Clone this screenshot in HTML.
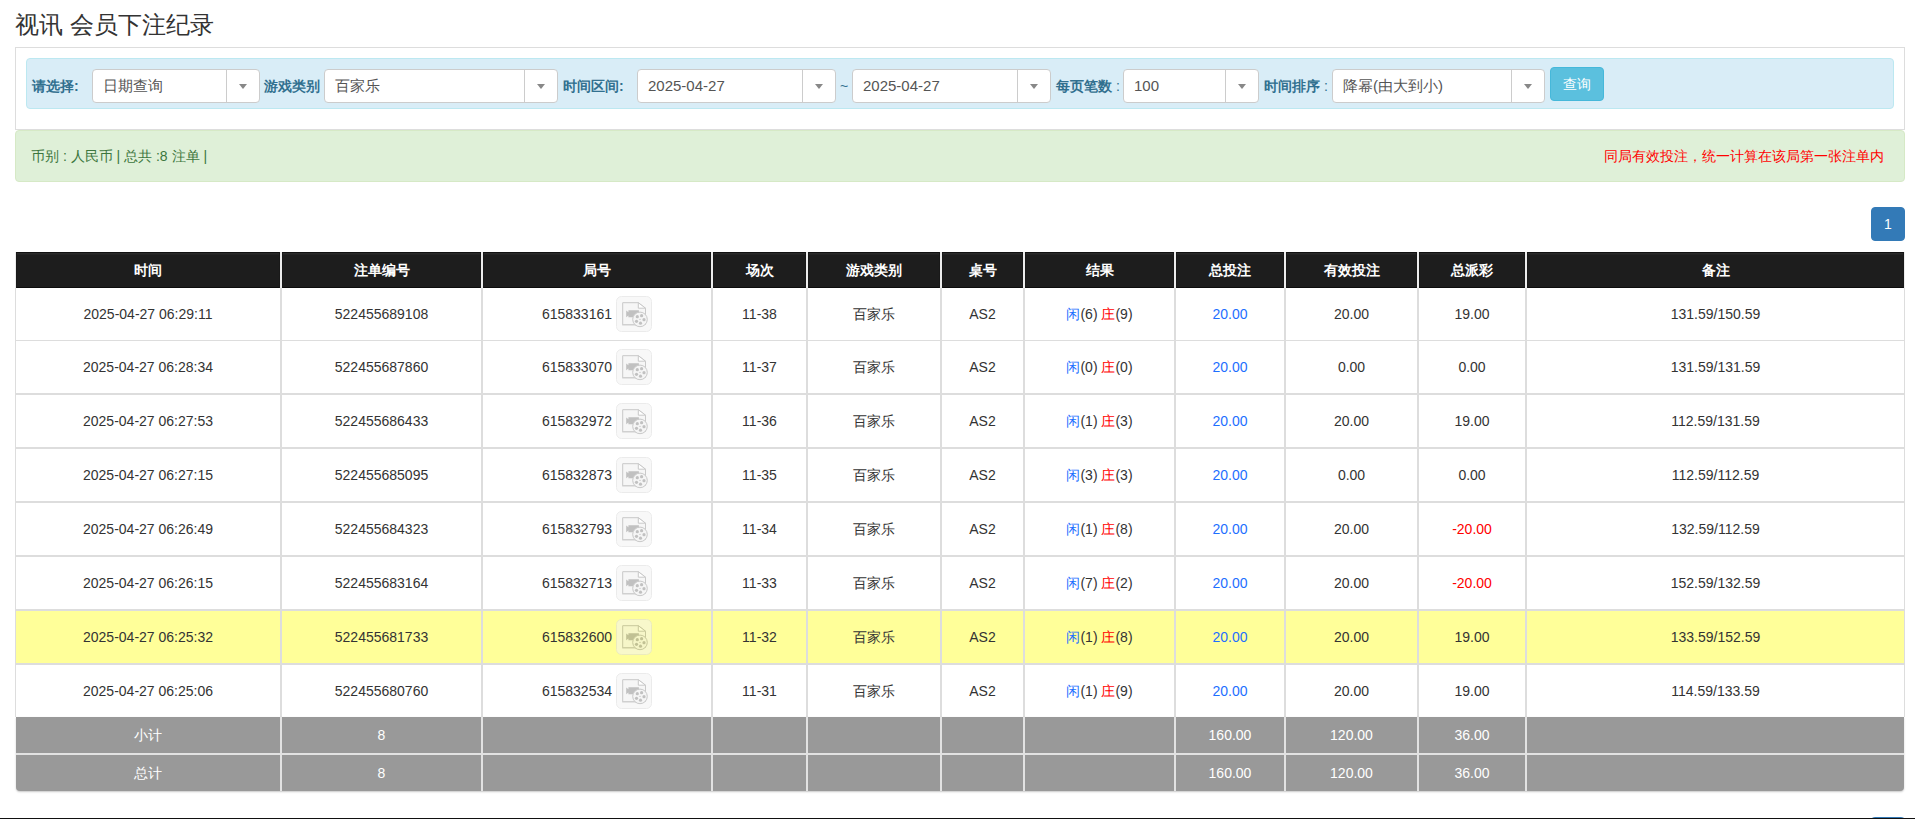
<!DOCTYPE html>
<html><head><meta charset="utf-8"><style>
*{box-sizing:border-box}
html,body{margin:0;padding:0;background:#fff}
body{width:1915px;height:819px;overflow:hidden;position:relative;font-family:"Liberation Sans",sans-serif;font-size:14px;color:#333}
.a{position:absolute}
.t{position:absolute;white-space:nowrap}
.sel{position:absolute;top:69px;height:34px;background:#fff;border:1px solid #ccc;border-radius:4px}
.sel .v{position:absolute;left:10px;top:0;line-height:32px;font-size:15px;color:#555;white-space:nowrap}
.sel .d{position:absolute;top:0;bottom:0;width:1px;background:#ccc}
.sel .c{position:absolute;top:14px;width:0;height:0;border-left:4px solid transparent;border-right:4px solid transparent;border-top:5px solid #888}
.lab{position:absolute;top:69px;line-height:34px;color:#31708f;font-weight:bold;white-space:nowrap}
.cell{position:absolute;text-align:center;white-space:nowrap}
</style></head><body>

<div class="t" style="left:15px;top:9px;font-size:24px;line-height:32px;color:#333">视讯 会员下注纪录</div>
<div class="a" style="left:15px;top:47px;width:1890px;height:83px;border:1px solid #ddd;border-bottom:1px solid #ddd"></div>
<div class="a" style="left:26px;top:58px;width:1868px;height:51px;background:#d9edf7;border:1px solid #bce8f1;border-radius:4px"></div>
<div class="lab" style="left:32px">请选择:</div>
<div class="lab" style="left:264px">游戏类别</div>
<div class="lab" style="left:563px">时间区间:</div>
<div class="lab" style="left:1056px">每页笔数<span style="font-weight:normal"> :</span></div>
<div class="lab" style="left:1264px">时间排序<span style="font-weight:normal"> :</span></div>
<div class="t" style="left:840px;top:69px;line-height:34px;color:#31708f">~</div>
<div class="sel" style="left:92px;width:168px"><div class="v">日期查询</div><div class="d" style="left:133px"></div><div class="c" style="left:146px"></div></div>
<div class="sel" style="left:324px;width:234px"><div class="v">百家乐</div><div class="d" style="left:199px"></div><div class="c" style="left:212px"></div></div>
<div class="sel" style="left:637px;width:199px"><div class="v">2025-04-27</div><div class="d" style="left:164px"></div><div class="c" style="left:177px"></div></div>
<div class="sel" style="left:852px;width:199px"><div class="v">2025-04-27</div><div class="d" style="left:164px"></div><div class="c" style="left:177px"></div></div>
<div class="sel" style="left:1123px;width:136px"><div class="v">100</div><div class="d" style="left:101px"></div><div class="c" style="left:114px"></div></div>
<div class="sel" style="left:1332px;width:213px"><div class="v">降幂(由大到小)</div><div class="d" style="left:178px"></div><div class="c" style="left:191px"></div></div>
<div class="a" style="left:1550px;top:67px;width:54px;height:34px;background:#5bc0de;border:1px solid #46b8da;border-radius:4px;color:#fff;text-align:center;line-height:32px">查询</div>
<div class="a" style="left:15px;top:130px;width:1890px;height:52px;background:#dff0d8;border:1px solid #d6e9c6;border-radius:4px"></div>
<div class="t" style="left:31px;top:146px;line-height:20px;color:#3c763d">币别 : 人民币 | 总共 :8 注单 |</div>
<div class="t" style="right:31px;top:146px;line-height:20px;color:#f00">同局有效投注，统一计算在该局第一张注单内</div>
<div class="a" style="left:1871px;top:207px;width:34px;height:34px;background:#337ab7;border:1px solid #337ab7;border-radius:4px;color:#fff;text-align:center;line-height:32px;font-size:14px">1</div>
<div class="a" style="left:15px;top:252px;width:266px;height:36px;background:#ececec"></div>
<div class="cell" style="left:16px;top:252px;width:264px;height:36px;background:#1d1d1d;border:1px solid #191919;border-top-color:#111;border-bottom-color:#0c0c0c;box-shadow:inset 0 1px 0 #2a2a2a,inset 0 2px 0 #232323;color:#fff;font-weight:bold;line-height:34px">时间</div>
<div class="a" style="left:281px;top:252px;width:201px;height:36px;background:#ececec"></div>
<div class="cell" style="left:282px;top:252px;width:199px;height:36px;background:#1d1d1d;border:1px solid #191919;border-top-color:#111;border-bottom-color:#0c0c0c;box-shadow:inset 0 1px 0 #2a2a2a,inset 0 2px 0 #232323;color:#fff;font-weight:bold;line-height:34px">注单编号</div>
<div class="a" style="left:482px;top:252px;width:230px;height:36px;background:#ececec"></div>
<div class="cell" style="left:483px;top:252px;width:228px;height:36px;background:#1d1d1d;border:1px solid #191919;border-top-color:#111;border-bottom-color:#0c0c0c;box-shadow:inset 0 1px 0 #2a2a2a,inset 0 2px 0 #232323;color:#fff;font-weight:bold;line-height:34px">局号</div>
<div class="a" style="left:712px;top:252px;width:95px;height:36px;background:#ececec"></div>
<div class="cell" style="left:713px;top:252px;width:93px;height:36px;background:#1d1d1d;border:1px solid #191919;border-top-color:#111;border-bottom-color:#0c0c0c;box-shadow:inset 0 1px 0 #2a2a2a,inset 0 2px 0 #232323;color:#fff;font-weight:bold;line-height:34px">场次</div>
<div class="a" style="left:807px;top:252px;width:134px;height:36px;background:#ececec"></div>
<div class="cell" style="left:808px;top:252px;width:132px;height:36px;background:#1d1d1d;border:1px solid #191919;border-top-color:#111;border-bottom-color:#0c0c0c;box-shadow:inset 0 1px 0 #2a2a2a,inset 0 2px 0 #232323;color:#fff;font-weight:bold;line-height:34px">游戏类别</div>
<div class="a" style="left:941px;top:252px;width:83px;height:36px;background:#ececec"></div>
<div class="cell" style="left:942px;top:252px;width:81px;height:36px;background:#1d1d1d;border:1px solid #191919;border-top-color:#111;border-bottom-color:#0c0c0c;box-shadow:inset 0 1px 0 #2a2a2a,inset 0 2px 0 #232323;color:#fff;font-weight:bold;line-height:34px">桌号</div>
<div class="a" style="left:1024px;top:252px;width:151px;height:36px;background:#ececec"></div>
<div class="cell" style="left:1025px;top:252px;width:149px;height:36px;background:#1d1d1d;border:1px solid #191919;border-top-color:#111;border-bottom-color:#0c0c0c;box-shadow:inset 0 1px 0 #2a2a2a,inset 0 2px 0 #232323;color:#fff;font-weight:bold;line-height:34px">结果</div>
<div class="a" style="left:1175px;top:252px;width:110px;height:36px;background:#ececec"></div>
<div class="cell" style="left:1176px;top:252px;width:108px;height:36px;background:#1d1d1d;border:1px solid #191919;border-top-color:#111;border-bottom-color:#0c0c0c;box-shadow:inset 0 1px 0 #2a2a2a,inset 0 2px 0 #232323;color:#fff;font-weight:bold;line-height:34px">总投注</div>
<div class="a" style="left:1285px;top:252px;width:133px;height:36px;background:#ececec"></div>
<div class="cell" style="left:1286px;top:252px;width:131px;height:36px;background:#1d1d1d;border:1px solid #191919;border-top-color:#111;border-bottom-color:#0c0c0c;box-shadow:inset 0 1px 0 #2a2a2a,inset 0 2px 0 #232323;color:#fff;font-weight:bold;line-height:34px">有效投注</div>
<div class="a" style="left:1418px;top:252px;width:108px;height:36px;background:#ececec"></div>
<div class="cell" style="left:1419px;top:252px;width:106px;height:36px;background:#1d1d1d;border:1px solid #191919;border-top-color:#111;border-bottom-color:#0c0c0c;box-shadow:inset 0 1px 0 #2a2a2a,inset 0 2px 0 #232323;color:#fff;font-weight:bold;line-height:34px">总派彩</div>
<div class="a" style="left:1526px;top:252px;width:379px;height:36px;background:#ececec"></div>
<div class="cell" style="left:1527px;top:252px;width:377px;height:36px;background:#1d1d1d;border:1px solid #191919;border-top-color:#111;border-bottom-color:#0c0c0c;box-shadow:inset 0 1px 0 #2a2a2a,inset 0 2px 0 #232323;color:#fff;font-weight:bold;line-height:34px">备注</div>
<div class="a" style="left:15px;top:288px;width:1890px;height:429px;background:#fff"></div>
<div class="a" style="left:15px;top:340px;width:1890px;height:1px;background:#ddd"></div>
<div class="a" style="left:15px;top:393px;width:1890px;height:2px;background:#ddd"></div>
<div class="a" style="left:15px;top:447px;width:1890px;height:2px;background:#ddd"></div>
<div class="a" style="left:15px;top:501px;width:1890px;height:2px;background:#ddd"></div>
<div class="a" style="left:15px;top:555px;width:1890px;height:2px;background:#ddd"></div>
<div class="a" style="left:15px;top:609px;width:1890px;height:2px;background:#ddd"></div>
<div class="a" style="left:15px;top:611px;width:1890px;height:52px;background:#ffff99"></div>
<div class="a" style="left:15px;top:663px;width:1890px;height:2px;background:#ddd"></div>
<div class="a" style="left:15px;top:288px;width:1px;height:429px;background:#ddd"></div>
<div class="a" style="left:1904px;top:288px;width:1px;height:429px;background:#ddd"></div>
<div class="a" style="left:280px;top:288px;width:2px;height:429px;background:#ddd"></div>
<div class="a" style="left:481px;top:288px;width:2px;height:429px;background:#ddd"></div>
<div class="a" style="left:711px;top:288px;width:2px;height:429px;background:#ddd"></div>
<div class="a" style="left:806px;top:288px;width:2px;height:429px;background:#ddd"></div>
<div class="a" style="left:940px;top:288px;width:2px;height:429px;background:#ddd"></div>
<div class="a" style="left:1023px;top:288px;width:2px;height:429px;background:#ddd"></div>
<div class="a" style="left:1174px;top:288px;width:2px;height:429px;background:#ddd"></div>
<div class="a" style="left:1284px;top:288px;width:2px;height:429px;background:#ddd"></div>
<div class="a" style="left:1417px;top:288px;width:2px;height:429px;background:#ddd"></div>
<div class="a" style="left:1525px;top:288px;width:2px;height:429px;background:#ddd"></div>
<div class="cell" style="left:15px;top:288px;width:266px;height:52px;line-height:52px">2025-04-27 06:29:11</div>
<div class="cell" style="left:281px;top:288px;width:201px;height:52px;line-height:52px">522455689108</div>
<div class="t" style="right:1303px;top:288px;line-height:52px">615833161</div>
<div class="a" style="left:616px;top:296px;width:36px;height:36px"><svg width="36" height="36" viewBox="0 0 36 36" style="position:absolute;left:0;top:0;opacity:0.55"><rect x="0.5" y="0.5" width="35" height="35" rx="5" fill="#f4f4f4" stroke="#dcdcdc"/>
<path d="M6.7 6.7 H22.3 L29.5 12.2 V28.5 H6.7 Z" fill="#efefef" stroke="#9d9d9d" stroke-width="1"/>
<path d="M22.3 6.7 V12.2 H29.5 Z" fill="#ffffff" stroke="#9d9d9d" stroke-width="1"/>
<rect x="6.2" y="28" width="16" height="1.5" fill="#aaaaaa"/>
<path d="M10.2 14.6 L12.4 16.2 V14.3 H22.9 V21.3 H12.4 V19.5 L10.2 21.2 Z" fill="#909090"/>
<circle cx="24" cy="23.4" r="7.3" fill="#ededed" stroke="#9d9d9d" stroke-width="1"/>
<circle cx="21.3" cy="20.7" r="1.6" fill="#909090"/><circle cx="25.6" cy="19.7" r="1.6" fill="#909090"/>
<circle cx="28" cy="23.7" r="1.6" fill="#909090"/><circle cx="24.5" cy="27.2" r="1.6" fill="#909090"/>
<circle cx="20.5" cy="25.3" r="1.6" fill="#909090"/><circle cx="24" cy="23.4" r="0.6" fill="#909090"/></svg></div>
<div class="cell" style="left:712px;top:288px;width:95px;height:52px;line-height:52px">11-38</div>
<div class="cell" style="left:807px;top:288px;width:134px;height:52px;line-height:52px">百家乐</div>
<div class="cell" style="left:941px;top:288px;width:83px;height:52px;line-height:52px">AS2</div>
<div class="cell" style="left:1024px;top:288px;width:151px;height:52px;line-height:52px"><span style="color:#1e6fff">闲</span>(6) <span style="color:#f00">庄</span>(9)</div>
<div class="cell" style="left:1175px;top:288px;width:110px;height:52px;line-height:52px"><span style="color:#1e6fff">20.00</span></div>
<div class="cell" style="left:1285px;top:288px;width:133px;height:52px;line-height:52px">20.00</div>
<div class="cell" style="left:1418px;top:288px;width:108px;height:52px;line-height:52px">19.00</div>
<div class="cell" style="left:1526px;top:288px;width:379px;height:52px;line-height:52px">131.59/150.59</div>
<div class="cell" style="left:15px;top:341px;width:266px;height:52px;line-height:52px">2025-04-27 06:28:34</div>
<div class="cell" style="left:281px;top:341px;width:201px;height:52px;line-height:52px">522455687860</div>
<div class="t" style="right:1303px;top:341px;line-height:52px">615833070</div>
<div class="a" style="left:616px;top:349px;width:36px;height:36px"><svg width="36" height="36" viewBox="0 0 36 36" style="position:absolute;left:0;top:0;opacity:0.55"><rect x="0.5" y="0.5" width="35" height="35" rx="5" fill="#f4f4f4" stroke="#dcdcdc"/>
<path d="M6.7 6.7 H22.3 L29.5 12.2 V28.5 H6.7 Z" fill="#efefef" stroke="#9d9d9d" stroke-width="1"/>
<path d="M22.3 6.7 V12.2 H29.5 Z" fill="#ffffff" stroke="#9d9d9d" stroke-width="1"/>
<rect x="6.2" y="28" width="16" height="1.5" fill="#aaaaaa"/>
<path d="M10.2 14.6 L12.4 16.2 V14.3 H22.9 V21.3 H12.4 V19.5 L10.2 21.2 Z" fill="#909090"/>
<circle cx="24" cy="23.4" r="7.3" fill="#ededed" stroke="#9d9d9d" stroke-width="1"/>
<circle cx="21.3" cy="20.7" r="1.6" fill="#909090"/><circle cx="25.6" cy="19.7" r="1.6" fill="#909090"/>
<circle cx="28" cy="23.7" r="1.6" fill="#909090"/><circle cx="24.5" cy="27.2" r="1.6" fill="#909090"/>
<circle cx="20.5" cy="25.3" r="1.6" fill="#909090"/><circle cx="24" cy="23.4" r="0.6" fill="#909090"/></svg></div>
<div class="cell" style="left:712px;top:341px;width:95px;height:52px;line-height:52px">11-37</div>
<div class="cell" style="left:807px;top:341px;width:134px;height:52px;line-height:52px">百家乐</div>
<div class="cell" style="left:941px;top:341px;width:83px;height:52px;line-height:52px">AS2</div>
<div class="cell" style="left:1024px;top:341px;width:151px;height:52px;line-height:52px"><span style="color:#1e6fff">闲</span>(0) <span style="color:#f00">庄</span>(0)</div>
<div class="cell" style="left:1175px;top:341px;width:110px;height:52px;line-height:52px"><span style="color:#1e6fff">20.00</span></div>
<div class="cell" style="left:1285px;top:341px;width:133px;height:52px;line-height:52px">0.00</div>
<div class="cell" style="left:1418px;top:341px;width:108px;height:52px;line-height:52px">0.00</div>
<div class="cell" style="left:1526px;top:341px;width:379px;height:52px;line-height:52px">131.59/131.59</div>
<div class="cell" style="left:15px;top:395px;width:266px;height:52px;line-height:52px">2025-04-27 06:27:53</div>
<div class="cell" style="left:281px;top:395px;width:201px;height:52px;line-height:52px">522455686433</div>
<div class="t" style="right:1303px;top:395px;line-height:52px">615832972</div>
<div class="a" style="left:616px;top:403px;width:36px;height:36px"><svg width="36" height="36" viewBox="0 0 36 36" style="position:absolute;left:0;top:0;opacity:0.55"><rect x="0.5" y="0.5" width="35" height="35" rx="5" fill="#f4f4f4" stroke="#dcdcdc"/>
<path d="M6.7 6.7 H22.3 L29.5 12.2 V28.5 H6.7 Z" fill="#efefef" stroke="#9d9d9d" stroke-width="1"/>
<path d="M22.3 6.7 V12.2 H29.5 Z" fill="#ffffff" stroke="#9d9d9d" stroke-width="1"/>
<rect x="6.2" y="28" width="16" height="1.5" fill="#aaaaaa"/>
<path d="M10.2 14.6 L12.4 16.2 V14.3 H22.9 V21.3 H12.4 V19.5 L10.2 21.2 Z" fill="#909090"/>
<circle cx="24" cy="23.4" r="7.3" fill="#ededed" stroke="#9d9d9d" stroke-width="1"/>
<circle cx="21.3" cy="20.7" r="1.6" fill="#909090"/><circle cx="25.6" cy="19.7" r="1.6" fill="#909090"/>
<circle cx="28" cy="23.7" r="1.6" fill="#909090"/><circle cx="24.5" cy="27.2" r="1.6" fill="#909090"/>
<circle cx="20.5" cy="25.3" r="1.6" fill="#909090"/><circle cx="24" cy="23.4" r="0.6" fill="#909090"/></svg></div>
<div class="cell" style="left:712px;top:395px;width:95px;height:52px;line-height:52px">11-36</div>
<div class="cell" style="left:807px;top:395px;width:134px;height:52px;line-height:52px">百家乐</div>
<div class="cell" style="left:941px;top:395px;width:83px;height:52px;line-height:52px">AS2</div>
<div class="cell" style="left:1024px;top:395px;width:151px;height:52px;line-height:52px"><span style="color:#1e6fff">闲</span>(1) <span style="color:#f00">庄</span>(3)</div>
<div class="cell" style="left:1175px;top:395px;width:110px;height:52px;line-height:52px"><span style="color:#1e6fff">20.00</span></div>
<div class="cell" style="left:1285px;top:395px;width:133px;height:52px;line-height:52px">20.00</div>
<div class="cell" style="left:1418px;top:395px;width:108px;height:52px;line-height:52px">19.00</div>
<div class="cell" style="left:1526px;top:395px;width:379px;height:52px;line-height:52px">112.59/131.59</div>
<div class="cell" style="left:15px;top:449px;width:266px;height:52px;line-height:52px">2025-04-27 06:27:15</div>
<div class="cell" style="left:281px;top:449px;width:201px;height:52px;line-height:52px">522455685095</div>
<div class="t" style="right:1303px;top:449px;line-height:52px">615832873</div>
<div class="a" style="left:616px;top:457px;width:36px;height:36px"><svg width="36" height="36" viewBox="0 0 36 36" style="position:absolute;left:0;top:0;opacity:0.55"><rect x="0.5" y="0.5" width="35" height="35" rx="5" fill="#f4f4f4" stroke="#dcdcdc"/>
<path d="M6.7 6.7 H22.3 L29.5 12.2 V28.5 H6.7 Z" fill="#efefef" stroke="#9d9d9d" stroke-width="1"/>
<path d="M22.3 6.7 V12.2 H29.5 Z" fill="#ffffff" stroke="#9d9d9d" stroke-width="1"/>
<rect x="6.2" y="28" width="16" height="1.5" fill="#aaaaaa"/>
<path d="M10.2 14.6 L12.4 16.2 V14.3 H22.9 V21.3 H12.4 V19.5 L10.2 21.2 Z" fill="#909090"/>
<circle cx="24" cy="23.4" r="7.3" fill="#ededed" stroke="#9d9d9d" stroke-width="1"/>
<circle cx="21.3" cy="20.7" r="1.6" fill="#909090"/><circle cx="25.6" cy="19.7" r="1.6" fill="#909090"/>
<circle cx="28" cy="23.7" r="1.6" fill="#909090"/><circle cx="24.5" cy="27.2" r="1.6" fill="#909090"/>
<circle cx="20.5" cy="25.3" r="1.6" fill="#909090"/><circle cx="24" cy="23.4" r="0.6" fill="#909090"/></svg></div>
<div class="cell" style="left:712px;top:449px;width:95px;height:52px;line-height:52px">11-35</div>
<div class="cell" style="left:807px;top:449px;width:134px;height:52px;line-height:52px">百家乐</div>
<div class="cell" style="left:941px;top:449px;width:83px;height:52px;line-height:52px">AS2</div>
<div class="cell" style="left:1024px;top:449px;width:151px;height:52px;line-height:52px"><span style="color:#1e6fff">闲</span>(3) <span style="color:#f00">庄</span>(3)</div>
<div class="cell" style="left:1175px;top:449px;width:110px;height:52px;line-height:52px"><span style="color:#1e6fff">20.00</span></div>
<div class="cell" style="left:1285px;top:449px;width:133px;height:52px;line-height:52px">0.00</div>
<div class="cell" style="left:1418px;top:449px;width:108px;height:52px;line-height:52px">0.00</div>
<div class="cell" style="left:1526px;top:449px;width:379px;height:52px;line-height:52px">112.59/112.59</div>
<div class="cell" style="left:15px;top:503px;width:266px;height:52px;line-height:52px">2025-04-27 06:26:49</div>
<div class="cell" style="left:281px;top:503px;width:201px;height:52px;line-height:52px">522455684323</div>
<div class="t" style="right:1303px;top:503px;line-height:52px">615832793</div>
<div class="a" style="left:616px;top:511px;width:36px;height:36px"><svg width="36" height="36" viewBox="0 0 36 36" style="position:absolute;left:0;top:0;opacity:0.55"><rect x="0.5" y="0.5" width="35" height="35" rx="5" fill="#f4f4f4" stroke="#dcdcdc"/>
<path d="M6.7 6.7 H22.3 L29.5 12.2 V28.5 H6.7 Z" fill="#efefef" stroke="#9d9d9d" stroke-width="1"/>
<path d="M22.3 6.7 V12.2 H29.5 Z" fill="#ffffff" stroke="#9d9d9d" stroke-width="1"/>
<rect x="6.2" y="28" width="16" height="1.5" fill="#aaaaaa"/>
<path d="M10.2 14.6 L12.4 16.2 V14.3 H22.9 V21.3 H12.4 V19.5 L10.2 21.2 Z" fill="#909090"/>
<circle cx="24" cy="23.4" r="7.3" fill="#ededed" stroke="#9d9d9d" stroke-width="1"/>
<circle cx="21.3" cy="20.7" r="1.6" fill="#909090"/><circle cx="25.6" cy="19.7" r="1.6" fill="#909090"/>
<circle cx="28" cy="23.7" r="1.6" fill="#909090"/><circle cx="24.5" cy="27.2" r="1.6" fill="#909090"/>
<circle cx="20.5" cy="25.3" r="1.6" fill="#909090"/><circle cx="24" cy="23.4" r="0.6" fill="#909090"/></svg></div>
<div class="cell" style="left:712px;top:503px;width:95px;height:52px;line-height:52px">11-34</div>
<div class="cell" style="left:807px;top:503px;width:134px;height:52px;line-height:52px">百家乐</div>
<div class="cell" style="left:941px;top:503px;width:83px;height:52px;line-height:52px">AS2</div>
<div class="cell" style="left:1024px;top:503px;width:151px;height:52px;line-height:52px"><span style="color:#1e6fff">闲</span>(1) <span style="color:#f00">庄</span>(8)</div>
<div class="cell" style="left:1175px;top:503px;width:110px;height:52px;line-height:52px"><span style="color:#1e6fff">20.00</span></div>
<div class="cell" style="left:1285px;top:503px;width:133px;height:52px;line-height:52px">20.00</div>
<div class="cell" style="left:1418px;top:503px;width:108px;height:52px;line-height:52px"><span style="color:#f00">-20.00</span></div>
<div class="cell" style="left:1526px;top:503px;width:379px;height:52px;line-height:52px">132.59/112.59</div>
<div class="cell" style="left:15px;top:557px;width:266px;height:52px;line-height:52px">2025-04-27 06:26:15</div>
<div class="cell" style="left:281px;top:557px;width:201px;height:52px;line-height:52px">522455683164</div>
<div class="t" style="right:1303px;top:557px;line-height:52px">615832713</div>
<div class="a" style="left:616px;top:565px;width:36px;height:36px"><svg width="36" height="36" viewBox="0 0 36 36" style="position:absolute;left:0;top:0;opacity:0.55"><rect x="0.5" y="0.5" width="35" height="35" rx="5" fill="#f4f4f4" stroke="#dcdcdc"/>
<path d="M6.7 6.7 H22.3 L29.5 12.2 V28.5 H6.7 Z" fill="#efefef" stroke="#9d9d9d" stroke-width="1"/>
<path d="M22.3 6.7 V12.2 H29.5 Z" fill="#ffffff" stroke="#9d9d9d" stroke-width="1"/>
<rect x="6.2" y="28" width="16" height="1.5" fill="#aaaaaa"/>
<path d="M10.2 14.6 L12.4 16.2 V14.3 H22.9 V21.3 H12.4 V19.5 L10.2 21.2 Z" fill="#909090"/>
<circle cx="24" cy="23.4" r="7.3" fill="#ededed" stroke="#9d9d9d" stroke-width="1"/>
<circle cx="21.3" cy="20.7" r="1.6" fill="#909090"/><circle cx="25.6" cy="19.7" r="1.6" fill="#909090"/>
<circle cx="28" cy="23.7" r="1.6" fill="#909090"/><circle cx="24.5" cy="27.2" r="1.6" fill="#909090"/>
<circle cx="20.5" cy="25.3" r="1.6" fill="#909090"/><circle cx="24" cy="23.4" r="0.6" fill="#909090"/></svg></div>
<div class="cell" style="left:712px;top:557px;width:95px;height:52px;line-height:52px">11-33</div>
<div class="cell" style="left:807px;top:557px;width:134px;height:52px;line-height:52px">百家乐</div>
<div class="cell" style="left:941px;top:557px;width:83px;height:52px;line-height:52px">AS2</div>
<div class="cell" style="left:1024px;top:557px;width:151px;height:52px;line-height:52px"><span style="color:#1e6fff">闲</span>(7) <span style="color:#f00">庄</span>(2)</div>
<div class="cell" style="left:1175px;top:557px;width:110px;height:52px;line-height:52px"><span style="color:#1e6fff">20.00</span></div>
<div class="cell" style="left:1285px;top:557px;width:133px;height:52px;line-height:52px">20.00</div>
<div class="cell" style="left:1418px;top:557px;width:108px;height:52px;line-height:52px"><span style="color:#f00">-20.00</span></div>
<div class="cell" style="left:1526px;top:557px;width:379px;height:52px;line-height:52px">152.59/132.59</div>
<div class="cell" style="left:15px;top:611px;width:266px;height:52px;line-height:52px">2025-04-27 06:25:32</div>
<div class="cell" style="left:281px;top:611px;width:201px;height:52px;line-height:52px">522455681733</div>
<div class="t" style="right:1303px;top:611px;line-height:52px">615832600</div>
<div class="a" style="left:616px;top:619px;width:36px;height:36px"><svg width="36" height="36" viewBox="0 0 36 36" style="position:absolute;left:0;top:0;opacity:0.55"><rect x="0.5" y="0.5" width="35" height="35" rx="5" fill="#f4f4f4" stroke="#dcdcdc"/>
<path d="M6.7 6.7 H22.3 L29.5 12.2 V28.5 H6.7 Z" fill="#efefef" stroke="#9d9d9d" stroke-width="1"/>
<path d="M22.3 6.7 V12.2 H29.5 Z" fill="#ffffff" stroke="#9d9d9d" stroke-width="1"/>
<rect x="6.2" y="28" width="16" height="1.5" fill="#aaaaaa"/>
<path d="M10.2 14.6 L12.4 16.2 V14.3 H22.9 V21.3 H12.4 V19.5 L10.2 21.2 Z" fill="#909090"/>
<circle cx="24" cy="23.4" r="7.3" fill="#ededed" stroke="#9d9d9d" stroke-width="1"/>
<circle cx="21.3" cy="20.7" r="1.6" fill="#909090"/><circle cx="25.6" cy="19.7" r="1.6" fill="#909090"/>
<circle cx="28" cy="23.7" r="1.6" fill="#909090"/><circle cx="24.5" cy="27.2" r="1.6" fill="#909090"/>
<circle cx="20.5" cy="25.3" r="1.6" fill="#909090"/><circle cx="24" cy="23.4" r="0.6" fill="#909090"/></svg></div>
<div class="cell" style="left:712px;top:611px;width:95px;height:52px;line-height:52px">11-32</div>
<div class="cell" style="left:807px;top:611px;width:134px;height:52px;line-height:52px">百家乐</div>
<div class="cell" style="left:941px;top:611px;width:83px;height:52px;line-height:52px">AS2</div>
<div class="cell" style="left:1024px;top:611px;width:151px;height:52px;line-height:52px"><span style="color:#1e6fff">闲</span>(1) <span style="color:#f00">庄</span>(8)</div>
<div class="cell" style="left:1175px;top:611px;width:110px;height:52px;line-height:52px"><span style="color:#1e6fff">20.00</span></div>
<div class="cell" style="left:1285px;top:611px;width:133px;height:52px;line-height:52px">20.00</div>
<div class="cell" style="left:1418px;top:611px;width:108px;height:52px;line-height:52px">19.00</div>
<div class="cell" style="left:1526px;top:611px;width:379px;height:52px;line-height:52px">133.59/152.59</div>
<div class="cell" style="left:15px;top:665px;width:266px;height:52px;line-height:52px">2025-04-27 06:25:06</div>
<div class="cell" style="left:281px;top:665px;width:201px;height:52px;line-height:52px">522455680760</div>
<div class="t" style="right:1303px;top:665px;line-height:52px">615832534</div>
<div class="a" style="left:616px;top:673px;width:36px;height:36px"><svg width="36" height="36" viewBox="0 0 36 36" style="position:absolute;left:0;top:0;opacity:0.55"><rect x="0.5" y="0.5" width="35" height="35" rx="5" fill="#f4f4f4" stroke="#dcdcdc"/>
<path d="M6.7 6.7 H22.3 L29.5 12.2 V28.5 H6.7 Z" fill="#efefef" stroke="#9d9d9d" stroke-width="1"/>
<path d="M22.3 6.7 V12.2 H29.5 Z" fill="#ffffff" stroke="#9d9d9d" stroke-width="1"/>
<rect x="6.2" y="28" width="16" height="1.5" fill="#aaaaaa"/>
<path d="M10.2 14.6 L12.4 16.2 V14.3 H22.9 V21.3 H12.4 V19.5 L10.2 21.2 Z" fill="#909090"/>
<circle cx="24" cy="23.4" r="7.3" fill="#ededed" stroke="#9d9d9d" stroke-width="1"/>
<circle cx="21.3" cy="20.7" r="1.6" fill="#909090"/><circle cx="25.6" cy="19.7" r="1.6" fill="#909090"/>
<circle cx="28" cy="23.7" r="1.6" fill="#909090"/><circle cx="24.5" cy="27.2" r="1.6" fill="#909090"/>
<circle cx="20.5" cy="25.3" r="1.6" fill="#909090"/><circle cx="24" cy="23.4" r="0.6" fill="#909090"/></svg></div>
<div class="cell" style="left:712px;top:665px;width:95px;height:52px;line-height:52px">11-31</div>
<div class="cell" style="left:807px;top:665px;width:134px;height:52px;line-height:52px">百家乐</div>
<div class="cell" style="left:941px;top:665px;width:83px;height:52px;line-height:52px">AS2</div>
<div class="cell" style="left:1024px;top:665px;width:151px;height:52px;line-height:52px"><span style="color:#1e6fff">闲</span>(1) <span style="color:#f00">庄</span>(9)</div>
<div class="cell" style="left:1175px;top:665px;width:110px;height:52px;line-height:52px"><span style="color:#1e6fff">20.00</span></div>
<div class="cell" style="left:1285px;top:665px;width:133px;height:52px;line-height:52px">20.00</div>
<div class="cell" style="left:1418px;top:665px;width:108px;height:52px;line-height:52px">19.00</div>
<div class="cell" style="left:1526px;top:665px;width:379px;height:52px;line-height:52px">114.59/133.59</div>
<div class="a" style="left:16px;top:717px;width:1888px;height:74px;background:#999;border-radius:0 0 4px 4px;box-shadow:0 1px 2px rgba(0,0,0,.22)"></div>
<div class="a" style="left:16px;top:753px;width:1888px;height:2px;background:#e2e2e2"></div>
<div class="a" style="left:280px;top:717px;width:2px;height:74px;background:#e2e2e2"></div>
<div class="a" style="left:481px;top:717px;width:2px;height:74px;background:#e2e2e2"></div>
<div class="a" style="left:711px;top:717px;width:2px;height:74px;background:#e2e2e2"></div>
<div class="a" style="left:806px;top:717px;width:2px;height:74px;background:#e2e2e2"></div>
<div class="a" style="left:940px;top:717px;width:2px;height:74px;background:#e2e2e2"></div>
<div class="a" style="left:1023px;top:717px;width:2px;height:74px;background:#e2e2e2"></div>
<div class="a" style="left:1174px;top:717px;width:2px;height:74px;background:#e2e2e2"></div>
<div class="a" style="left:1284px;top:717px;width:2px;height:74px;background:#e2e2e2"></div>
<div class="a" style="left:1417px;top:717px;width:2px;height:74px;background:#e2e2e2"></div>
<div class="a" style="left:1525px;top:717px;width:2px;height:74px;background:#e2e2e2"></div>
<div class="cell" style="left:15px;top:717px;width:266px;height:36px;line-height:36px;color:#fff">小计</div>
<div class="cell" style="left:281px;top:717px;width:201px;height:36px;line-height:36px;color:#fff">8</div>
<div class="cell" style="left:1175px;top:717px;width:110px;height:36px;line-height:36px;color:#fff">160.00</div>
<div class="cell" style="left:1285px;top:717px;width:133px;height:36px;line-height:36px;color:#fff">120.00</div>
<div class="cell" style="left:1418px;top:717px;width:108px;height:36px;line-height:36px;color:#fff">36.00</div>
<div class="cell" style="left:15px;top:755px;width:266px;height:36px;line-height:36px;color:#fff">总计</div>
<div class="cell" style="left:281px;top:755px;width:201px;height:36px;line-height:36px;color:#fff">8</div>
<div class="cell" style="left:1175px;top:755px;width:110px;height:36px;line-height:36px;color:#fff">160.00</div>
<div class="cell" style="left:1285px;top:755px;width:133px;height:36px;line-height:36px;color:#fff">120.00</div>
<div class="cell" style="left:1418px;top:755px;width:108px;height:36px;line-height:36px;color:#fff">36.00</div>
<div class="a" style="left:0;top:818px;width:1915px;height:1px;background:#111"></div>
<div class="a" style="left:1871px;top:817px;width:34px;height:6px;background:#337ab7;border-radius:4px 4px 0 0"></div>
<div class="a" style="left:0;top:818px;width:1915px;height:1px;background:#111"></div>
</body></html>
